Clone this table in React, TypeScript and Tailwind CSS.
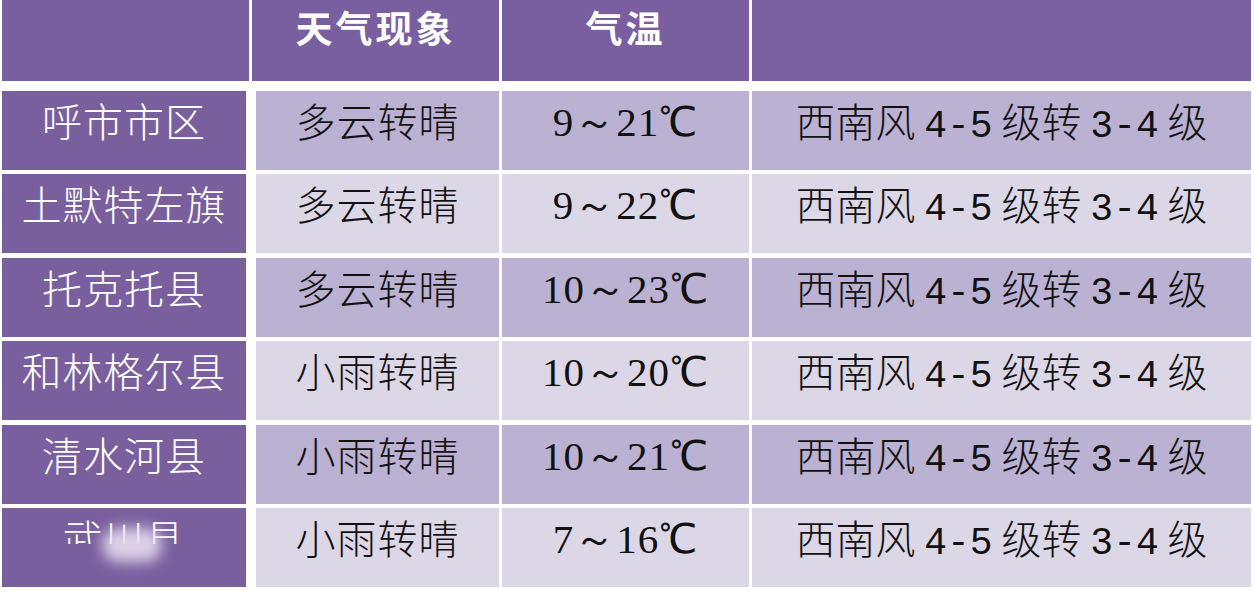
const rows = [
  { area: "呼市市区", weather: "多云转晴", temp: "9～21℃" },
  { area: "土默特左旗", weather: "多云转晴", temp: "9～22℃" },
  { area: "托克托县", weather: "多云转晴", temp: "10～23℃" },
  { area: "和林格尔县", weather: "小雨转晴", temp: "10～20℃" },
  { area: "清水河县", weather: "小雨转晴", temp: "10～21℃" },
  { area: "武川县", weather: "小雨转晴", temp: "7～16℃" },
];

const cjk = "font-['Noto_Sans_CJK_SC',sans-serif]";
const mono = "font-['Liberation_Mono','Noto_Sans_CJK_SC',monospace]";

export default function App() {
  return (
    <div className={`w-[1254px] h-[592px] overflow-hidden bg-white pl-[2px] ${cjk}`}>
      {/* header */}
      <div className="flex gap-[3px] h-[81px] text-white font-bold text-[37px] leading-none">
        <div className="w-[247px] bg-[#7a5fa0]" />
        <div className="w-[247px] bg-[#7a5fa0] flex justify-center pt-[9px] tracking-[3px]">天气现象</div>
        <div className="w-[247px] bg-[#7a5fa0] flex justify-center pt-[9px] tracking-[3px]">气温</div>
        <div className="w-[499px] bg-[#7b60a0]" />
      </div>

      <div className="flex flex-col gap-[4.4px] mt-[10px]">
        {rows.map((r, i) => {
          const bg = i % 2 === 0 ? "bg-[#bbb1d2]" : "bg-[#dcd7e7]";
          const last = i === rows.length - 1;
          return (
            <div key={r.area} className="flex h-[79px] text-[40px] leading-none">
              <div className="relative w-[244px] bg-[#7a5f9f] text-white font-light flex justify-center pt-[9px] tracking-[1px] overflow-hidden">
                {r.area}
                {last && (
                  <>
                    <div className="absolute left-0 right-0 top-[36px] bottom-0 bg-[#7a5f9f]" />
                    <div className="absolute left-[100px] top-[20px] w-[60px] h-[34px] rounded-full bg-[#e6def0] blur-[7px] opacity-90" />
                  </>
                )}
              </div>
              <div className="w-[10px]" />
              <div className={`w-[243px] ${bg} flex justify-center pt-[9px] text-[#111] font-light tracking-[1px]`}>
                {r.weather}
              </div>
              <div className="w-[3px]" />
              <div className={`w-[247px] ${bg} flex justify-center pt-[11px] text-[#111] font-['Liberation_Serif',serif] text-[41px] tracking-[1px]`}>
                {r.temp}
              </div>
              <div className="w-[3px]" />
              <div className={`w-[499px] ${bg} flex justify-center pt-[9px] text-[#111] font-light`}>
                <span>
                  西南风 <span className={`${mono} text-[38px]`}>4-5</span> 级转{" "}
                  <span className={`${mono} text-[38px]`}>3-4</span> 级
                </span>
              </div>
            </div>
          );
        })}
      </div>
    </div>
  );
}
